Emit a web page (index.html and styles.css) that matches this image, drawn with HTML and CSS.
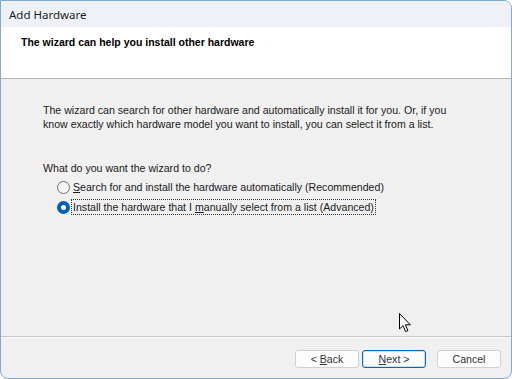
FILE: index.html
```html
<!DOCTYPE html>
<html>
<head>
<meta charset="utf-8">
<link rel="stylesheet" href="styles.css">
</head>
<body>
<div class="window">
  <div class="titlebar">Add Hardware</div>
  <div class="header">
    <div class="header-title">The wizard can help you install other hardware</div>
  </div>
  <div class="content">
    <p class="intro">The wizard can search for other hardware and automatically install it for you. Or, if you<br>know exactly which hardware model you want to install, you can select it from a list.</p>
    <p class="question">What do you want the wizard to do?</p>
    <div class="options">
      <label class="option">
        <span class="radio"></span>
        <span class="label"><u>S</u>earch for and install the hardware automatically (Recommended)</span>
      </label>
      <label class="option">
        <span class="radio checked"></span>
        <span class="label focused">Install the hardware that I <u>m</u>anually select from a list (Advanced)</span>
      </label>
    </div>
    <svg class="cursor" width="13" height="20" viewBox="0 0 13 20">
      <path d="M0.5 0.5 L0.5 16 L4 12.6 L6.6 18.6 L8.9 17.6 L6.4 11.8 L11.3 11.8 Z" fill="#fff" stroke="#000" stroke-width="1" stroke-linejoin="round"/>
    </svg>
  </div>
  <div class="footer">
    <button class="btn">&lt; <u>B</u>ack</button>
    <button class="btn default"><u>N</u>ext &gt;</button>
    <button class="btn cancel">Cancel</button>
  </div>
</div>
</body>
</html>
```
FILE: styles.css
```css
html, body {
  margin: 0;
  padding: 0;
  background: #ffffff;
}
body {
  font-family: "Liberation Sans", Arial, sans-serif;
  font-size: 10.6px;
  color: #1a1a1a;
}
.window {
  width: 512px;
  height: 379px;
  box-sizing: border-box;
  border: 1px solid #7fa9d6;
  border-radius: 0 8px 8px 8px;
  overflow: hidden;
  display: flex;
  flex-direction: column;
  background: #f0f0f0;
}
.titlebar {
  height: 26px;
  line-height: 27px;
  padding-left: 8px;
  background: #eef2f7;
  font-family: "Noto Sans", sans-serif;
  font-size: 11.5px;
  color: #1c1c1c;
}
.header {
  background: #ffffff;
  border-bottom: 1px solid #b4b4b4;
  box-sizing: border-box;
  height: 52px;
  padding: 9px 0 0 20px;
}
.header-title {
  font-weight: bold;
  font-size: 10.5px;
  color: #000;
}
.content {
  flex: 1;
  position: relative;
  padding: 24px 0 0 42px;
  border-bottom: 1px solid #c8c8c8;
  box-shadow: 0 1px 0 #fafafa;
}
.intro {
  margin: 0;
  line-height: 14px;
}
.question {
  margin: 30px 0 0 0;
  line-height: 14px;
}
.options {
  margin: 4px 0 0 14px;
  display: flex;
  flex-direction: column;
  gap: 4px;
}
.option {
  display: flex;
  align-items: center;
  gap: 1px;
  height: 16px;
}
.radio {
  width: 13px;
  height: 13px;
  box-sizing: border-box;
  border-radius: 50%;
  border: 1px solid #6f6f6f;
  background: #f7f7f7;
  flex: none;
}
.radio.checked {
  border: 4px solid #005fb8;
  background: #ffffff;
}
.label {
  padding: 0 1px;
  line-height: 14px;
  border: 1px solid transparent;
}
.label.focused {
  border: 1px dotted #333;
}
.cursor {
  position: absolute;
  left: 398px;
  top: 234px;
}
.footer {
  height: 41px;
  display: flex;
  justify-content: flex-end;
  align-items: flex-start;
  padding: 13px 10px 0 0;
  box-sizing: border-box;
  gap: 3px;
}
.btn {
  width: 64px;
  height: 18px;
  box-sizing: border-box;
  border: 1px solid #d0d0d0;
  border-radius: 3px;
  background: #fdfdfd;
  font-family: "Liberation Sans", Arial, sans-serif;
  font-size: 10.6px;
  color: #333;
  padding: 0;
}
.btn.default {
  border: 1px solid #0067c0;
  box-shadow: inset 0 0 0 1px #cde0f4;
}
.btn.cancel {
  margin-left: 8px;
}
```
